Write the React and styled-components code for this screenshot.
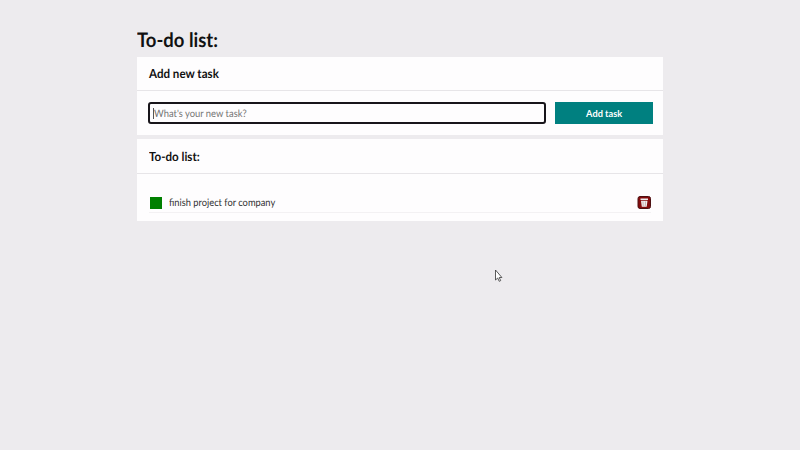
import React from "react";
import styled, { createGlobalStyle } from "styled-components";

const GlobalStyle = createGlobalStyle`
  * { box-sizing: border-box; }
  body { margin: 0; background: #edebee; font-family: Lato, sans-serif; color: #111; overflow: hidden; text-rendering: geometricPrecision; }
`;
const Page = styled.main`
  position: relative;
  width: 800px;
  height: 450px;
  padding: 27px 137px 0;
`;
const Condensed = styled.span`
  display: inline-block;
  white-space: nowrap;
  transform: scaleX(${(p) => p.$ratio});
  transform-origin: ${(p) => p.$origin || "left"} center;
`;
const Title = styled.h1`
  margin: 0 0 4px;
  font-size: 20px;
  line-height: 26px;
  font-weight: 700;
`;
const Panel = styled.section`
  background: #fefdfe;
  margin-bottom: 4px;
`;
const PanelTitle = styled.h2`
  margin: 0;
  height: ${(p) => p.$height}px;
  padding: 0 12px;
  line-height: ${(p) => p.$height}px;
  font-size: 12.5px;
  font-weight: 700;
  border-bottom: 1px solid #e7e5e8;
`;
const Form = styled.form`
  display: flex;
  gap: 9px;
  height: 44px;
  padding: 11px 10px 0 11px;
`;
const Field = styled.div`
  display: flex;
  align-items: center;
  flex: none;
  width: 398px;
  height: 22px;
  border: 2px solid #18151a;
  border-radius: 3px;
  padding: 1px 0 0 3px;
  font-size: 10.3px;
  color: #757575;
`;
const Caret = styled.span`
  width: 1px;
  height: 11px;
  background: #555;
`;
const AddButton = styled.button`
  width: 98px;
  height: 22px;
  padding: 0;
  border: 0;
  background: #008080;
  color: #fff;
  font: 700 10.3px Lato, sans-serif;
`;
const List = styled.ul`
  margin: 0;
  padding: 19px 12px 8px;
  list-style: none;
`;
const Task = styled.li`
  display: flex;
  align-items: center;
  height: 20px;
  border-bottom: 1px solid #f3f1f3;
  font-size: 10.3px;
  color: #333;
`;
const Check = styled.span`
  width: 12px;
  height: 12px;
  margin: 0 7px 0 1px;
  background: #008000;
`;
const Trash = styled.svg`
  margin-left: auto;
`;
const Cursor = styled.svg`
  position: absolute;
  left: 494px;
  top: 269px;
`;

export default function App() {
  return (
    <Page>
      <GlobalStyle />
      <Title><Condensed $ratio={0.924}>To-do list:</Condensed></Title>
      <Panel>
        <PanelTitle $height={34}><Condensed $ratio={0.926}>Add new task</Condensed></PanelTitle>
        <Form>
          <Field><Caret /><Condensed $ratio={0.912}>What's your new task?</Condensed></Field>
          <AddButton type="button"><Condensed $ratio={0.895} $origin="center">Add task</Condensed></AddButton>
        </Form>
      </Panel>
      <Panel>
        <PanelTitle $height={35}><Condensed $ratio={0.926}>To-do list:</Condensed></PanelTitle>
        <List>
          <Task>
            <Check />
            <Condensed $ratio={0.903}>finish project for company</Condensed>
            <Trash width="14" height="13" viewBox="0 0 14 13">
              <rect x="1" y=".5" width="12.500" height="12" rx="2" fill="#850b0c" stroke="#4c1012" />
              <path d="M4 4.800h6.500l-.8 6H4.800zM3.500 2.600h7.500v1.400H3.500z" fill="#eee" />
              <path d="M6 5.500l.2 4.500m2.300-4.500L8.300 10" stroke="#b98585" strokeWidth=".6" />
            </Trash>
          </Task>
        </List>
      </Panel>
      <Cursor width="9" height="14" viewBox="0 0 9 14">
        <path d="M1.500 1v10l2.200-2 1.500 3.300 1.500-.7-1.500-3.100h2.700z" fill="#fff" stroke="#333" strokeWidth=".8" />
      </Cursor>
    </Page>
  );
}
